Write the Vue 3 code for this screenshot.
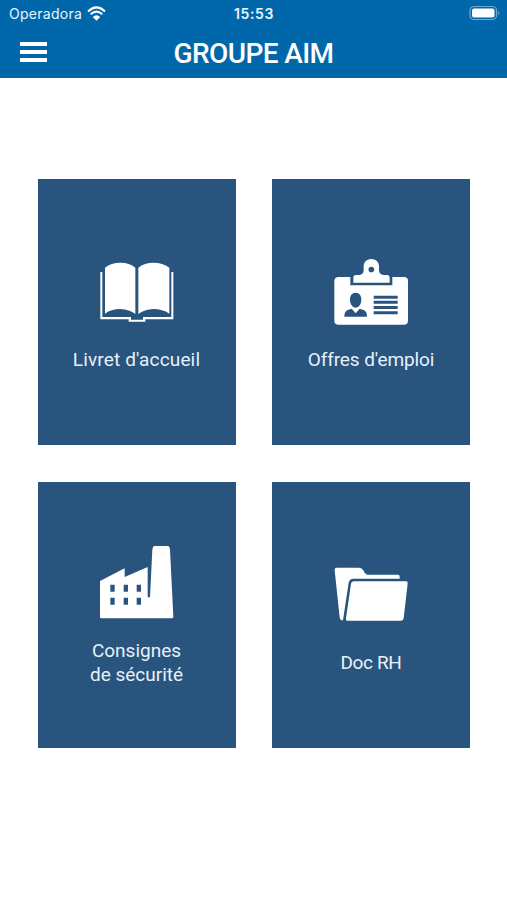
<template>
  <div class="app">
    <header class="header">
      <div class="status">
        <div class="status__left">
          <span class="status__carrier">Operadora</span>
          <svg class="status__wifi" viewBox="264 16 56 44">
            <path
              d="M267 32Q292 8 317 32M275 40Q292 25 309 40"
              fill="none"
              stroke="currentColor"
              stroke-width="6"
            />
            <path d="M281 48Q292 39 303 48L292 59Z" fill="currentColor" />
          </svg>
        </div>
        <span class="status__time">{{ time }}</span>
        <div class="status__right">
          <svg class="status__battery" viewBox="0 0 32 16">
            <rect x="1" y="1.5" width="26.5" height="13" rx="4" fill="none" stroke="#6fa9d2" stroke-width="1.2" />
            <rect x="3" y="3.5" width="22.5" height="9" rx="2" fill="#fff" />
            <path d="M29 5.7Q31.4 8 29 10.3Z" fill="#6fa9d2" />
          </svg>
        </div>
      </div>
      <div class="navbar">
        <button class="navbar__menu" type="button" aria-label="Menu">
          <span class="navbar__line"></span>
          <span class="navbar__line"></span>
          <span class="navbar__line"></span>
        </button>
        <h1 class="navbar__title">{{ title }}</h1>
        <span class="navbar__spacer"></span>
      </div>
    </header>

    <main class="tiles">
      <button v-for="tile in tiles" :key="tile.id" class="tile" type="button">
        <svg class="tile__icon" :viewBox="tile.viewBox">
          <path
            v-for="(shape, index) in tile.shapes"
            :key="index"
            :d="shape"
            fill="currentColor"
            fill-rule="evenodd"
          />
        </svg>
        <span class="tile__label" :class="`tile__label--${tile.id}`">
          <span v-for="line in tile.lines" :key="line" class="tile__line">{{ line }}</span>
        </span>
      </button>
    </main>
  </div>
</template>

<script setup>
import { ref } from "vue";

const title = ref("GROUPE AIM");
const time = ref("15:53");

const tiles = ref([
  {
    id: "livret",
    lines: ["Livret d'accueil"],
    viewBox: "30 15 222 222",
    shapes: [
      "M45 53Q63 38 91 38Q119 38 136 53V192Q119 179 91 177Q63 177 45 191Z",
      "M145 53Q163 38 190 38Q218 38 238 53V191Q218 177 190 177Q163 179 145 192Z",
      "M31 66H37V201H123V209H159V201H244V66H250V208H166V215H116V208H31Z",
    ],
  },
  {
    id: "offres",
    lines: ["Offres d'emploi"],
    viewBox: "30 15 222 222",
    shapes: [
      "M44 81H79V106H205V81H240Q252 81 252 93V212Q252 224 240 224H44Q31 224 31 212V93Q31 81 44 81ZM95 128C84 128 77 137 78 151C79 164 86 173 95 173C104 173 111 164 112 151C113 137 106 128 95 128ZM61 200H129Q129 184 119 180L107 176L95 190L83 176L71 180Q61 184 61 200ZM149 137H221V146H149ZM149 152H221V161H149ZM149 168H221V177H149ZM149 184H221V193H149Z",
      "M88 98V83Q88 75 96 75H106Q119 73 119 60V49C119 36 129 27 142 27C155 27 165 36 165 49V60Q165 73 179 75H189Q197 75 197 83V98ZM142 50A8.5 8.5 0 1 0 142 67A8.5 8.5 0 1 0 142 50Z",
    ],
  },
  {
    id: "consignes",
    lines: ["Consignes", "de sécurité"],
    viewBox: "30 34 222 222",
    shapes: [
      "M30 139L104 101V127L173 97V188H180L187 45Q188 32 199 32H229Q239 32 240 45L250 246Q250 251 245 251H34Q30 251 30 247ZM61 150H74V171H61ZM101 150H114V171H101ZM140 150H153V171H140ZM61 189H74V210H61ZM101 189H114V210H101ZM140 189H153V210H140Z",
    ],
  },
  {
    id: "doc",
    lines: ["Doc RH"],
    viewBox: "30 9.5 222 222",
    shapes: [
      "M37 39H105Q114 39 119 48Q123 59 132 60H222Q227 60 227 66V72H88Q77 72 74 84L57 196H52Q48 195 47 188L32 46Q32 39 37 39Z",
      "M89 79H246Q252 79 251 86L239 190Q238 198 231 198H72Q65 198 66 190L81 87Q82 79 89 79Z",
    ],
  },
]);
</script>

<style>
body {
  margin: 0;
  background: #ffffff;
}
</style>

<style scoped>
.app {
  min-height: 900px;
  background: #ffffff;
  color: #ffffff;
  font-family: Roboto, "Liberation Sans", sans-serif;
}

.header {
  height: 78px;
  background: #0068aa;
}

.status {
  display: grid;
  grid-template-columns: 1fr auto 1fr;
  align-items: center;
  height: 26px;
  padding: 0 6px 0 9px;
  font-family: Inter, sans-serif;
  color: #e9f5fd;
}

.status__left {
  display: flex;
  align-items: center;
  gap: 5px;
}

.status__carrier {
  font-size: 14px;
  letter-spacing: 0.27px;
}

.status__wifi {
  width: 19px;
  height: 15px;
  color: #ffffff;
}

.status__time {
  margin-right: 2px;
  font-size: 14px;
  font-weight: 600;
  letter-spacing: 0.6px;
}

.status__right {
  display: flex;
  justify-content: flex-end;
}

.status__battery {
  width: 32px;
  height: 16px;
  overflow: visible;
}

.navbar {
  display: grid;
  grid-template-columns: 28px 1fr 28px;
  align-items: center;
  height: 52px;
  padding: 0 20px;
}

.navbar__menu {
  display: flex;
  flex-direction: column;
  gap: 4px;
  width: 27px;
  padding: 0;
  border: none;
  background: none;
  cursor: pointer;
}

.navbar__line {
  height: 4px;
  background: #ffffff;
}

.navbar__title {
  margin: 0;
  padding-top: 4px;
  font-size: 28px;
  font-weight: 500;
  line-height: 48px;
  letter-spacing: -0.6px;
  text-align: center;
  white-space: nowrap;
}

.tiles {
  display: grid;
  grid-template-columns: 198px 198px;
  grid-auto-rows: 266px;
  justify-content: center;
  gap: 37px 36px;
  padding: 101.4px 0 0 1px;
}

.tile {
  display: flex;
  flex-direction: column;
  align-items: center;
  justify-content: center;
  gap: 19px;
  padding: 2px 0 0;
  border: none;
  background: #29547d;
  color: #ffffff;
  font-family: inherit;
  cursor: pointer;
}

.tile__icon {
  width: 74px;
  height: 74px;
}

.tile__label {
  color: #e6f1fb;
  font-size: 19px;
  line-height: 23.5px;
  text-align: center;
}

.tile__label--livret {
  margin-right: 1px;
  letter-spacing: 0.15px;
}

.tile__label--offres {
  letter-spacing: -0.1px;
}

.tile__label--consignes {
  margin-right: 1px;
}

.tile__label--doc {
  letter-spacing: -0.35px;
}

.tile__line {
  display: block;
}
</style>
